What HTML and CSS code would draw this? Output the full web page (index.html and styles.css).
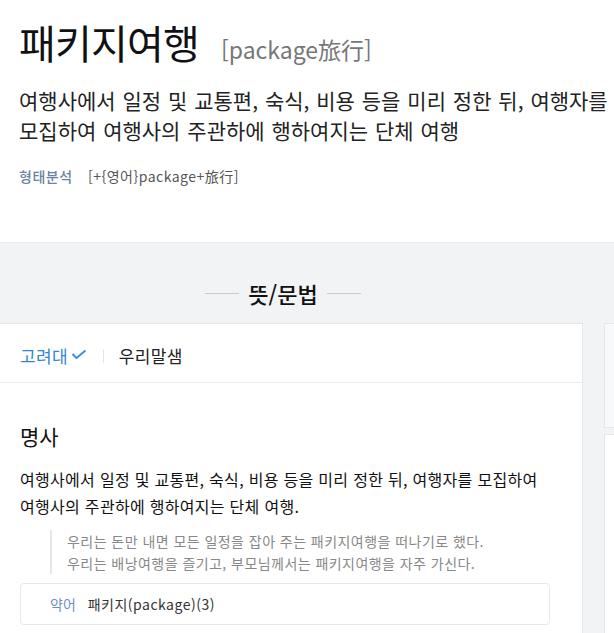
FILE: index.html
```html
<!DOCTYPE html>
<html lang="ko">

<head>
    <meta charset="UTF-8">
    <meta name="viewport" content="width=device-width, initial-scale=1.0">
    <title>패키지여행</title>
    <link rel="stylesheet" href="styles.css">
</head>

<body>
    <header class="entry-head">
        <h1 class="entry-title">패키지여행<span class="entry-origin">[package旅行]</span></h1>
        <p class="entry-summary">여행사에서 일정 및 교통편, 숙식, 비용 등을 미리 정한 뒤, 여행자를 모집하여 여행사의 주관하에 행하여지는 단체 여행</p>
        <div class="morph">
            <span class="morph-label">형태분석</span>
            <span class="morph-value">[+{영어}package+旅行]</span>
        </div>
    </header>

    <section class="entry-body">
        <div class="main-col">
            <h2 class="section-title"><span>뜻/문법</span></h2>

            <div class="card">
                <div class="tabs">
                    <span class="tab active">고려대
                        <svg class="check" width="16" height="11" viewBox="0 0 16 11">
                            <path d="M1.5 5 L5.5 9 L14.5 1.5" fill="none" stroke="#3a8ee0" stroke-width="2" />
                        </svg>
                    </span>
                    <span class="tab-sep"></span>
                    <span class="tab">우리말샘</span>
                </div>

                <div class="sense">
                    <h3 class="pos">명사</h3>
                    <p class="definition">여행사에서 일정 및 교통편, 숙식, 비용 등을 미리 정한 뒤, 여행자를 모집하여 여행사의 주관하에 행하여지는 단체 여행.</p>
                    <ul class="examples">
                        <li>우리는 돈만 내면 모든 일정을 잡아 주는 패키지여행을 떠나기로 했다.</li>
                        <li>우리는 배낭여행을 즐기고, 부모님께서는 패키지여행을 자주 가신다.</li>
                    </ul>
                    <div class="related">
                        <span class="related-label">약어</span>
                        <span class="related-value">패키지(package)(3)</span>
                    </div>
                </div>
            </div>
        </div>

        <aside class="side-col">
            <div class="side-box"></div>
            <div class="side-card"></div>
        </aside>
    </section>
</body>

</html>
```

FILE: styles.css
```css
html,
body {
    height: 100%;
}

body {
    margin: 0;
    display: flex;
    flex-direction: column;
    font-family: "Noto Sans CJK KR", "Noto Sans", sans-serif;
    color: #222;
    background-color: #f2f3f5;
    overflow: hidden;
    word-break: keep-all;
}

.entry-head {
    background-color: #fff;
    padding: 19px 4px 56px 19px;
    border-bottom: 1px solid #e8e9eb;
}

.entry-title {
    margin: 0;
    font-size: 40px;
    font-weight: 400;
    line-height: 46px;
    letter-spacing: -0.8px;
    color: #111;
}

.entry-origin {
    margin-left: 22px;
    font-size: 23px;
    font-weight: 400;
    letter-spacing: 0;
    color: #777;
}

.entry-summary {
    margin: 13px 0 0;
    font-size: 21px;
    line-height: 30px;
    color: #222;
    letter-spacing: 0;
    word-spacing: 1px;
}

.morph {
    margin-top: 21px;
    font-size: 14px;
    line-height: 20px;
    letter-spacing: 0.5px;
}

.morph-label {
    color: #6c82a2;
    font-weight: 500;
    margin-right: 11px;
}

.morph-value {
    color: #555;
}

.entry-body {
    flex: 1;
    min-height: 0;
    display: flex;
    padding-top: 35px;
    overflow: hidden;
}

.main-col {
    flex: 0 0 583px;
    display: flex;
    flex-direction: column;
}

.section-title {
    margin: 0 0 15px;
    padding-right: 17px;
    display: flex;
    justify-content: center;
    align-items: center;
    gap: 9px;
    font-size: 22px;
    font-weight: 500;
    line-height: 30px;
    color: #111;
}

.section-title::before,
.section-title::after {
    content: "";
    width: 34px;
    height: 1px;
    background-color: #c8c9cc;
}

.card {
    flex: 1;
    margin-left: -1px;
    background-color: #fff;
    border: 1px solid #e6e7e9;
    border-bottom: none;
}

.tabs {
    display: flex;
    align-items: center;
    padding: 20px 20px 14px;
    border-bottom: 1px solid #ebebeb;
    font-size: 17px;
    line-height: 24px;
    letter-spacing: 0.3px;
}

.tab {
    display: flex;
    align-items: center;
    color: #222;
}

.tab.active {
    color: #2f86d8;
}

.check {
    margin-left: 3px;
    margin-top: -4px;
}

.tab-sep {
    width: 1px;
    height: 13px;
    margin: 0 15px 0 16px;
    background-color: #e3e3e3;
}

.sense {
    padding: 38px 20px 0;
}

.pos {
    margin: 0;
    font-size: 21px;
    font-weight: 400;
    line-height: 30px;
    color: #111;
}

.definition {
    margin: 15px 0 0;
    font-size: 16px;
    line-height: 27px;
    letter-spacing: 0.3px;
    color: #111;
}

.examples {
    list-style: none;
    margin: 10px 0 0 30px;
    padding-left: 15px;
    border-left: 2px solid #e5e5e5;
    font-size: 14px;
    line-height: 22px;
    letter-spacing: 0.45px;
    color: #888;
}

.related {
    margin-top: 9px;
    width: 499px;
    padding: 9px 0 9px 29px;
    border: 1px solid #e8e8e8;
    border-radius: 4px;
    font-size: 14px;
    line-height: 22px;
}

.related-label {
    color: #6d8fbf;
    margin-right: 8px;
}

.related-value {
    color: #333;
    letter-spacing: 0.5px;
}

.side-col {
    flex: 0 0 300px;
    display: flex;
    flex-direction: column;
    margin-left: 21px;
    padding-top: 45px;
}

.side-box {
    height: 103px;
    background-color: #f8f9fa;
    border: 1px solid #e6e7e9;
}

.side-card {
    flex: 1;
    margin-top: 6px;
    background-color: #fff;
    border: 1px solid #e6e7e9;
    border-bottom: none;
}
```
